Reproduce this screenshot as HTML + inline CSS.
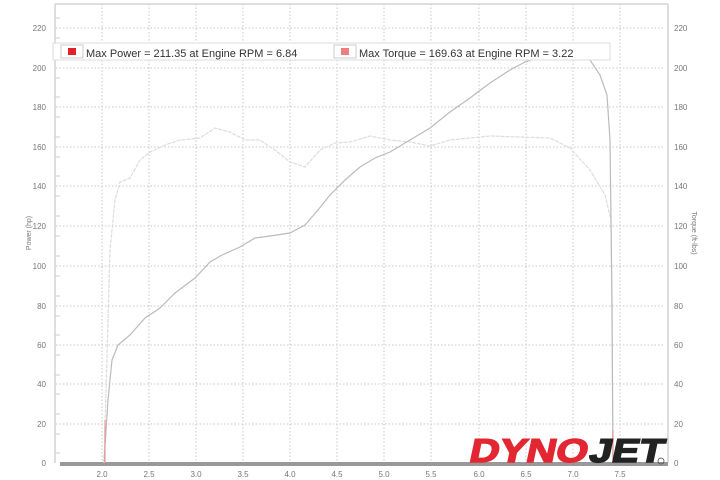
<!DOCTYPE html><html><head><style>body{margin:0;background:#fff}svg{display:block}</style></head><body>
<svg width="720" height="480" xmlns="http://www.w3.org/2000/svg" font-family="Liberation Sans, sans-serif">
<rect width="720" height="480" fill="#fff"/>
<g stroke="#c8c8c8" stroke-dasharray="1.5,2" stroke-width="1">
<path d="M56 28H665M56 68H665M56 107H665M56 147H665M56 186H665M56 226H665M56 266H665M56 306H665M56 345H665M56 384H665M56 424H665"/>
<path d="M102 4V463M149 4V463M196 4V463M243 4V463M290 4V463M337 4V463M384 4V463M431 4V463M479 4V463M526 4V463M573 4V463M620 4V463"/>
</g>
<path d="M55 4H668M55 4V463M668 4V463" stroke="#d4d4d4" stroke-width="1.5" fill="none"/>
<g stroke="#ccc" stroke-width="1"><path d="M55 18H60M55 38H60M55 58H60M55 78H60M55 97H60M55 117H60M55 137H60M55 157H60M55 176H60M55 196H60M55 216H60M55 236H60M55 256H60M55 276H60M55 296H60M55 316H60M55 335H60M55 355H60M55 375H60M55 394H60M55 414H60M55 434H60M55 453H60"/></g>
<rect x="60" y="462" width="608" height="4" fill="#999"/>
<g font-size="8" fill="#777">
<text x="46" y="31" text-anchor="end">220</text><text x="46" y="71" text-anchor="end">200</text><text x="46" y="110" text-anchor="end">180</text><text x="46" y="150" text-anchor="end">160</text><text x="46" y="189" text-anchor="end">140</text><text x="46" y="229" text-anchor="end">120</text><text x="46" y="269" text-anchor="end">100</text><text x="46" y="309" text-anchor="end">80</text><text x="46" y="348" text-anchor="end">60</text><text x="46" y="387" text-anchor="end">40</text><text x="46" y="427" text-anchor="end">20</text><text x="46" y="466" text-anchor="end">0</text>
<text x="674" y="31">220</text><text x="674" y="71">200</text><text x="674" y="110">180</text><text x="674" y="150">160</text><text x="674" y="189">140</text><text x="674" y="229">120</text><text x="674" y="269">100</text><text x="674" y="309">80</text><text x="674" y="348">60</text><text x="674" y="387">40</text><text x="674" y="427">20</text><text x="674" y="466">0</text>
<g text-anchor="middle"><text x="102" y="477">2.0</text><text x="149" y="477">2.5</text><text x="196" y="477">3.0</text><text x="243" y="477">3.5</text><text x="290" y="477">4.0</text><text x="337" y="477">4.5</text><text x="384" y="477">5.0</text><text x="431" y="477">5.5</text><text x="479" y="477">6.0</text><text x="526" y="477">6.5</text><text x="573" y="477">7.0</text><text x="620" y="477">7.5</text></g>
<text transform="translate(31 233) rotate(-90)" font-size="7" text-anchor="middle">Power (hp)</text>
<text transform="translate(692 233) rotate(90)" font-size="7" text-anchor="middle">Torque (ft-lbs)</text>
</g>
<polyline fill="none" stroke="#ddd" stroke-width="1.2" stroke-dasharray="4,1" points="104,463 110,250 115,200 120,182 130,178 140,160 150,152 165,145 180,140 200,138 215,128 230,132 245,140 260,140 275,150 290,162 305,167 320,150 335,143 350,142 370,136 390,140 410,142 430,146 450,140 470,138 490,136 520,137 550,138 570,148 590,170 605,195 611,220 613,463"/>
<polyline fill="none" stroke="#bbb" stroke-width="1.2" points="104,462 108,400 112,360 118,345 130,335 145,318 160,308 175,293 195,278 210,262 222,255 240,247 255,238 270,236 290,233 305,225 318,210 330,195 345,180 360,167 375,158 390,152 410,140 430,128 450,112 470,98 490,83 510,70 525,62 545,55 570,55 590,60 600,75 607,95 610,140 612,300 613,463"/>
<path d="M105 463V420M613 463V430" stroke="#e88" stroke-width="1"/>
<rect x="53" y="43" width="557" height="17" fill="#fff" stroke="#ddd"/>
<rect x="61" y="45" width="22" height="13" fill="#fff" stroke="#ccc"/><rect x="68" y="48" width="8" height="7" fill="#e0202a"/>
<text x="86" y="57" font-size="11" fill="#333">Max Power = 211.35 at Engine RPM = 6.84</text>
<rect x="334" y="45" width="22" height="13" fill="#fff" stroke="#ccc"/><rect x="341" y="48" width="8" height="7" fill="#ec8080"/>
<text x="359" y="57" font-size="11" fill="#333">Max Torque = 169.63 at Engine RPM = 3.22</text>
<g transform="skewX(-12)" transform-origin="560 462">
<text x="468" y="462" font-size="33" font-weight="bold" fill="#e22733" stroke="#e22733" stroke-width="1.5" textLength="118" lengthAdjust="spacingAndGlyphs">DYNO</text>
<text x="588" y="462" font-size="33" font-weight="bold" fill="#222" stroke="#222" stroke-width="1.5" textLength="74" lengthAdjust="spacingAndGlyphs">JET</text>
</g>
<circle cx="661" cy="461" r="3" fill="none" stroke="#444" stroke-width="0.8"/>
</svg></body></html>
